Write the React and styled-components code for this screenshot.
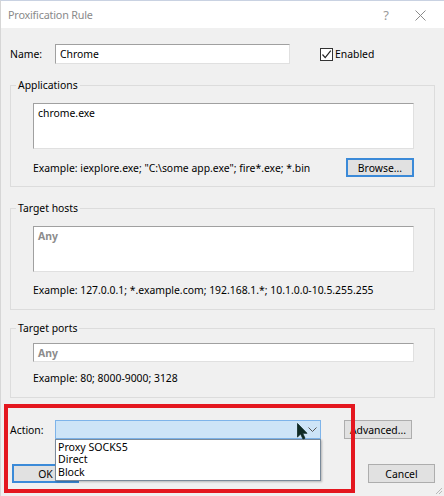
import styled, { createGlobalStyle } from "styled-components";

const Global = createGlobalStyle`
	html, body { margin: 0; padding: 0; background: #f0f0f0; }
	body { font-family: "Noto Sans", "Liberation Sans", sans-serif; font-size: 10.4px; color: #000; }
`;

const Window = styled.div`
	position: relative;
	width: 444px;
	height: 496px;
	box-sizing: border-box;
	background: #f0f0f0;
	border-top: 1px solid #c9d2e2;
	border-left: 1px solid #d6d6d6;
	overflow: hidden;
	display: flex;
	flex-direction: column;
`;

const TitleBar = styled.div`
	height: 27px;
	flex: none;
	background: #fff;
	display: flex;
	align-items: center;
	padding-left: 7px;
	font-size: 10.8px;
	letter-spacing: -0.2px;
	color: #8a8a8a;
`;

const Title = styled.span`
	flex: 1;
`;

const TitleIcon = styled.span`
	width: ${(p) => p.$w}px;
	text-align: center;
	color: #9a9a9a;
	font-size: ${(p) => p.$size}px;
`;

const Body = styled.div`
	padding: 0 9px 0 9px;
	display: flex;
	flex-direction: column;
`;

const NameRow = styled.div`
	display: flex;
	align-items: center;
	height: 20px;
	margin-top: 16px;
`;

const Label = styled.span`
	width: 45px;
	flex: none;
`;

const TextInput = styled.div`
	box-sizing: border-box;
	width: ${(p) => p.$w}px;
	height: ${(p) => p.$h}px;
	margin-top: ${(p) => p.$top || 0}px;
	background: #fff;
	border: 1px solid #a8a8a8;
	border-color: #a0a0a0 #e0e0e0 #e0e0e0 #a0a0a0;
	padding: 2px 4px;
	line-height: 14px;
	color: ${(p) => (p.$muted ? "#8c8c8c" : "#000")};
	font-weight: ${(p) => (p.$muted ? 700 : 400)};
`;

const Check = styled.label`
	display: flex;
	align-items: center;
	margin-left: 30px;
	gap: 2px;
`;

const Box = styled.span`
	width: 13px;
	height: 13px;
	box-sizing: border-box;
	border: 1px solid #333;
	background: #fff;
	display: flex;
	align-items: center;
	justify-content: center;
`;

const Group = styled.fieldset`
	margin: ${(p) => p.$top}px 0 0 0;
	padding: 0 20px ${(p) => p.$bottom}px 22px;
	border: 1px solid #dcdcdc;
	min-width: 0;
	height: ${(p) => p.$h}px;
	box-sizing: border-box;
	display: flex;
	flex-direction: column;
`;

const Legend = styled.legend`
	padding: 0 2px;
	margin-left: -17px;
	line-height: 16px;
`;

const ExampleRow = styled.div`
	display: flex;
	align-items: center;
	justify-content: space-between;
	margin-top: ${(p) => p.$top}px;
	height: 19px;
`;

const Button = styled.div`
	box-sizing: border-box;
	width: ${(p) => p.$w}px;
	height: 19px;
	background: #e1e1e1;
	border: ${(p) => (p.$def ? "2px solid #3b8ad8" : "1px solid #adadad")};
	display: flex;
	align-items: center;
	justify-content: center;
	flex: none;
`;

const ActionArea = styled.div`
	position: relative;
	margin-top: 22px;
	display: flex;
	flex-direction: column;
`;

const ActionRow = styled.div`
	display: flex;
	align-items: center;
	height: 19px;
`;

const Combo = styled.div`
	position: relative;
	box-sizing: border-box;
	width: 266px;
	height: 19px;
	background: #cde4f7;
	border: 1px solid #7eb4ea;
	margin-right: 23px;
	display: flex;
	align-items: center;
	justify-content: flex-end;
	padding-right: 3px;
`;

const DropList = styled.div`
	position: absolute;
	left: -1px;
	top: 18px;
	width: 266px;
	box-sizing: border-box;
	background: #fff;
	border: 1px solid #7a8a9a;
	box-shadow: 1px 1px 2px rgba(0, 0, 0, 0.25);
	padding: 1px 0 2px 2px;
	z-index: 2;
`;

const Item = styled.div`
	line-height: 12.3px;
	font-size: 10.6px;
`;

const Cursor = styled.svg`
	position: absolute;
	left: 241px;
	top: 2px;
	z-index: 3;
`;

const BottomRow = styled.div`
	display: flex;
	justify-content: space-between;
	margin-top: 25px;
	padding-left: 2px;
`;

const RedFrame = styled.div`
	position: absolute;
	left: 3px;
	top: 403px;
	width: 351px;
	height: 89px;
	box-sizing: border-box;
	border: 4px solid #e4171f;
	z-index: 4;
	pointer-events: none;
`;

const Grip = styled.svg`
	position: absolute;
	right: 1px;
	bottom: 1px;
`;

export default function App() {
	return (
		<>
			<Global />
			<Window>
				<TitleBar>
					<Title>Proxification Rule</Title>
					<TitleIcon $w={20} $size={13}>?</TitleIcon>
					<TitleIcon $w={48} $size={15}>
						<svg width="11" height="11" viewBox="0 0 11 11">
							<path d="M0.5 0.5 L10.5 10.5 M10.5 0.5 L0.5 10.5" stroke="#8a8a8a" strokeWidth="1" />
						</svg>
					</TitleIcon>
				</TitleBar>
				<Body>
					<NameRow>
						<Label>Name:</Label>
						<TextInput $w={235} $h={20}>Chrome</TextInput>
						<Check>
							<Box>
								<svg width="11" height="11" viewBox="0 0 11 11">
									<path d="M1.5 5.5 L4.2 8.6 L9.8 1.6" fill="none" stroke="#222" strokeWidth="1.2" />
								</svg>
							</Box>
							Enabled
						</Check>
					</NameRow>

					<Group $top={13} $h={110} $bottom={8}>
						<Legend>Applications</Legend>
						<TextInput $w={381} $h={46} $top={10}>chrome.exe</TextInput>
						<ExampleRow $top={9}>
							<span>Example: iexplore.exe; "C:\some app.exe"; fire*.exe; *.bin</span>
							<Button $w={68} $def>Browse...</Button>
						</ExampleRow>
					</Group>

					<Group $top={13} $h={110} $bottom={8}>
						<Legend>Target hosts</Legend>
						<TextInput $w={381} $h={46} $top={10} $muted>Any</TextInput>
						<ExampleRow $top={8}>
							<span>Example: 127.0.0.1; *.example.com; 192.168.1.*; 10.1.0.0-10.5.255.255</span>
						</ExampleRow>
					</Group>

					<Group $top={10} $h={78} $bottom={4}>
						<Legend>Target ports</Legend>
						<TextInput $w={381} $h={19} $top={7} $muted>Any</TextInput>
						<ExampleRow $top={6}>
							<span>Example: 80; 8000-9000; 3128</span>
						</ExampleRow>
					</Group>

					<ActionArea>
						<ActionRow>
							<Label>Action:</Label>
							<Combo>
								<svg width="9" height="6" viewBox="0 0 9 6">
									<path d="M0.5 0.5 L4.5 4.5 L8.5 0.5" fill="none" stroke="#555" strokeWidth="1" />
								</svg>
								<Cursor width="11" height="17" viewBox="0 0 11 17">
									<path d="M0.5 0.5 L0.5 14 L3.6 11 L6 16 L8 15.2 L5.7 10.3 L10 10.3 Z" fill="#0f2a24" stroke="#0f2a24" strokeWidth="0.8" />
								</Cursor>
								<DropList>
									<Item>Proxy SOCKS5</Item>
									<Item>Direct</Item>
									<Item>Block</Item>
								</DropList>
							</Combo>
							<Button $w={68}>Advanced...</Button>
						</ActionRow>
						<BottomRow>
							<Button $w={67} $def>OK</Button>
							<Button $w={67}>Cancel</Button>
						</BottomRow>
					</ActionArea>
				</Body>
				<RedFrame />
				<Grip width="10" height="10" viewBox="0 0 10 10">
					<path d="M9 3 L3 9 M9 6 L6 9" stroke="#b8b8b8" strokeWidth="1" />
				</Grip>
			</Window>
		</>
	);
}
